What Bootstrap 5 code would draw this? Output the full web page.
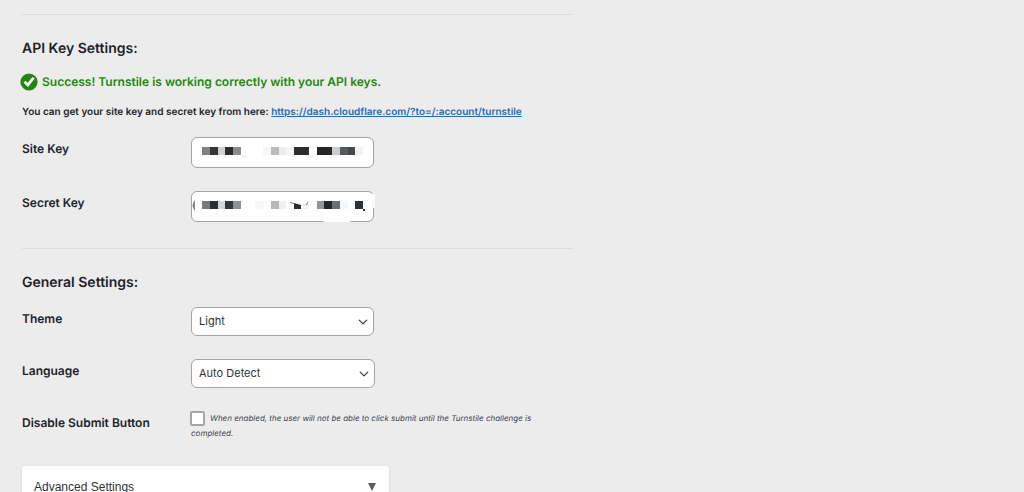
<!DOCTYPE html>
<html lang="en">
<head>
<meta charset="utf-8">
<meta name="viewport" content="width=device-width, initial-scale=1">
<title>Turnstile Settings</title>
<link href="https://cdn.jsdelivr.net/npm/bootstrap@5.3.0/dist/css/bootstrap.min.css" rel="stylesheet">
<style>
  body { background: #ececec; color: #1d2327; font-family: Inter, "Liberation Sans", sans-serif; font-size: 11px; line-height: 16px; text-rendering: geometricPrecision; }
  .settings { max-width: 595px; padding: 14px 22px 0; }
  .rule { margin: 0; border-top: 1px solid #dcdcde; opacity: 1; }
  .rule-lower { margin-top: 26px; }
  .section-title { font-size: 14px; font-weight: 600; line-height: 20px; margin: 0 0 14px; padding-top: 24px; }
  .status { color: #23870f; font-size: 12px; font-weight: 600; line-height: 18px; margin: 0 0 13px -2px; gap: 4px; }
  .intro { font-size: 10px; font-weight: 600; margin-bottom: 17px; }
  .intro a { color: #2a69b3; }
  .setting { display: grid; grid-template-columns: 169px minmax(0, 1fr); margin-bottom: 23px; }
  .setting-name { font-size: 12px; font-weight: 600; padding-top: 4px; justify-self: start; }
  .field { width: 183px; }
  .field .form-control, .field .form-select { font-size: 11px; line-height: 16px; color: #2c3338; background-color: #fff; border: 1px solid #a3a5a8; border-radius: 6px; padding: 5px 7px 7px; height: 29px; }
  .field .form-control { height: 31px; }
  .field .form-select { background-position: right 5px center; background-size: 10px; padding-right: 20px; }
  .field-wide { width: 184px; }
  .mask { position: absolute; inset: 0; pointer-events: none; }
  .tick { width: 15px; height: 15px; margin: 0 5px 0 -1px; border: 2px solid #a3a5a8; border-radius: 4px; vertical-align: middle; }
  .hint { font-size: 8px; font-style: italic; line-height: 15px; color: #3c434a; max-width: 345px; }
  .advanced { max-width: 367px; border: 0; border-radius: 4px; box-shadow: 0 1px 3px #0000001a; margin-top: 25px; overflow: hidden; }
  .advanced button { font: 12px/18px "Liberation Sans", sans-serif; color: #2c3338; background: #fff; padding: 12px; border: 0; }
</style>
</head>
<body>
<main class="settings">
  <hr class="rule">
  <h2 class="section-title">API Key Settings:</h2>
  <div class="status d-flex align-items-center">
    <svg width="18" height="18" viewBox="0 0 18 18" aria-hidden="true"><circle cx="9" cy="9" r="8.6" fill="#23870f"/><path d="M3.500 9.600 5.600 7.800 7.600 10 12.500 3.900 14.600 5.500 8 13.900Z" fill="#fff"/></svg>
    <span>Success! Turnstile is working correctly with your API keys.</span>
  </div>
  <p class="intro">You can get your site key and secret key from here: <a href="https://dash.cloudflare.com/?to=/:account/turnstile">https://dash.cloudflare.com/?to=/:account/turnstile</a></p>

  <div class="setting">
    <label class="setting-name" for="site-key">Site Key</label>
    <div class="field position-relative">
      <input class="form-control" id="site-key" type="text">
      <svg class="mask" width="184" height="31" viewBox="0 0 184 31" shape-rendering="crispEdges" aria-hidden="true">
        <path fill="#808183" d="M11 10h8v8h-8z"/><path fill="#333436" d="M19 10h8v8h-8z"/><path fill="#d0d1d2" d="M27 10h7v8h-7z"/><path fill="#2a2b2c" d="M34 10h8v8h-8z"/><path fill="#8a8b8d" d="M42 10h8v8h-8z"/>
        <path fill="#f4f4f5" d="M50 18h7v3h-7zM115 18h8v3h-8zM138 18h8v3h-8z"/><path fill="#f5f6f8" d="M72 10h8v8h-8zM95 10h8v8h-8z"/><path fill="#bbbcbc" d="M80 10h8v8h-8z"/><path fill="#eeeeef" d="M88 10h7v8h-7z"/>
        <path fill="#2c2e2e" d="M103 10h15v8h-15z"/><path fill="#252727" d="M126 10h15v8h-15z"/><path fill="#c8cccf" d="M141 10h8v8h-8z"/><path fill="#56595c" d="M149 10h8v8h-8z"/><path fill="#46484b" d="M157 10h7v8h-7z"/><path fill="#f1f2f3" d="M164 10h8v8h-8z"/>
      </svg>
    </div>
  </div>
  <div class="setting">
    <label class="setting-name" for="secret-key">Secret Key</label>
    <div class="field position-relative">
      <input class="form-control" id="secret-key" type="text">
      <svg class="mask" width="184" height="31" viewBox="0 0 184 31" aria-hidden="true">
        <path fill="#fff" d="M180 3h4v14h-4zM131 30h30l-3 1h-24z"/><path fill="#f7f7f8" d="M181 9h3v8h-3z"/>
        <path fill="#85878a" d="M4 9v11Q-1 15 4 9z"/>
        <g shape-rendering="crispEdges"><path fill="#77797a" d="M11 10h8v8h-8z"/><path fill="#2c2d2e" d="M19 10h8v8h-8z"/><path fill="#d5d6d7" d="M27 10h7v8h-7z"/><path fill="#333538" d="M34 10h8v8h-8z"/><path fill="#8c9093" d="M42 10h8v8h-8z"/>
        <path fill="#f6f7f9" d="M64 10h9v8h-9zM149 10h8v8h-8z"/><path fill="#b8b9ba" d="M80 10h8v8h-8z"/><path fill="#eff0f2" d="M88 10h7v8h-7zM111 13h7v5h-7z"/>
        <path fill="#92969a" d="M126 10h7v8h-7z"/><path fill="#252728" d="M133 10h8v8h-8z"/><path fill="#6c7073" d="M141 10h8v8h-8z"/><path fill="#2d3033" d="M164 10h8v8h-8z"/></g>
        <path fill="#2c2e2e" d="M103 12l7 2v4h-7zM172 18h2v2h-2z"/><path stroke="#77797a" fill="none" d="M99 11.500l4 1M115 14l2-3"/>
      </svg>
    </div>
  </div>

  <hr class="rule rule-lower">
  <h2 class="section-title">General Settings:</h2>
  <div class="setting">
    <label class="setting-name" for="theme">Theme</label>
    <div class="field"><select class="form-select" id="theme"><option>Light</option><option>Dark</option><option>Auto</option></select></div>
  </div>
  <div class="setting">
    <label class="setting-name" for="language">Language</label>
    <div class="field field-wide"><select class="form-select" id="language"><option>Auto Detect</option><option>English</option></select></div>
  </div>
  <div class="setting">
    <label class="setting-name" for="disable-submit">Disable Submit Button</label>
    <div class="hint"><input class="form-check-input tick" id="disable-submit" type="checkbox" aria-describedby="disable-hint"><span id="disable-hint">When enabled, the user will not be able to click submit until the Turnstile challenge is completed.</span></div>
  </div>

  <div class="card advanced">
    <button class="d-flex justify-content-between align-items-center w-100" type="button"><span>Advanced Settings</span>
      <svg width="10" height="10" viewBox="0 0 10 10" aria-hidden="true"><path fill="#5a5d60" d="M1 1h8L5 9z"/></svg></button>
  </div>
</main>
<script src="https://cdn.jsdelivr.net/npm/bootstrap@5.3.0/dist/js/bootstrap.bundle.min.js"></script>
</body>
</html>
